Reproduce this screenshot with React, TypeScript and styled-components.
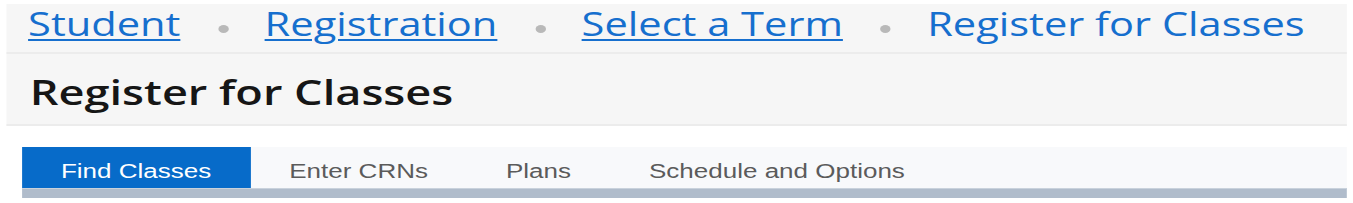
import React from "react";
import styled, { createGlobalStyle } from "styled-components";

const SCALE = 1.3;

const Global = createGlobalStyle`
  html, body {
    margin: 0;
    padding: 0;
    background: #ffffff;
    overflow: hidden;
  }
  * { box-sizing: border-box; }
`;

const Stretch = styled.div`
  width: ${1353 / SCALE}px;
  transform: scaleX(${SCALE});
  transform-origin: 0 0;
  padding: 4px 4.8px 0 4.6px;
  display: flex;
  flex-direction: column;
`;

const BreadcrumbBar = styled.nav`
  height: 50px;
  background: #f6f6f6;
  border-bottom: 2px solid #ececec;
  padding: 4.4px 17px 0;
  display: flex;
  align-items: flex-start;
  font-family: "Open Sans", sans-serif;
  font-size: 32px;
  line-height: 32px;
  color: #166fce;
`;

const Crumb = styled.a<{ $current?: boolean }>`
  color: #166fce;
  text-decoration: ${(p) => (p.$current ? "none" : "underline")};
  text-decoration-thickness: 1.5px;
  text-underline-offset: 3px;
  white-space: nowrap;
  cursor: pointer;
`;

const Dot = styled.span`
  width: 8px;
  height: 8px;
  border-radius: 50%;
  background: #b9b9b9;
  margin: 16.5px 27.8px 0 29px;
  flex: none;
`;

const TitleBar = styled.header`
  height: 72px;
  background: #f6f6f6;
  border-bottom: 2px solid #ececec;
  padding: 20.6px 17px 0 18.3px;
`;

const Title = styled.h1`
  margin: 0;
  font-family: "Open Sans", sans-serif;
  font-weight: 600;
  font-size: 34.7px;
  line-height: 34px;
  color: #161616;
  white-space: nowrap;
`;

const TabArea = styled.div`
  margin: 21px 0 0 12.3px;
  display: flex;
  flex-direction: column;
`;

const TabList = styled.div`
  display: flex;
  background: #f8f9fb;
  height: 41px;
`;

const Tab = styled.button<{ $active?: boolean }>`
  border: none;
  margin: 0;
  padding: 7px 30px 0;
  height: 41px;
  line-height: 34px;
  font-family: "Liberation Sans", Arial, sans-serif;
  font-size: 20px;
  white-space: nowrap;
  cursor: pointer;
  background: ${(p) => (p.$active ? "#076bc9" : "transparent")};
  color: ${(p) => (p.$active ? "#ffffff" : "#5b5b5b")};
`;

const TabRule = styled.div`
  height: 10px;
  background: #b0bccb;
  border-top: 1px solid #c9d2dc;
`;

const crumbs = ["Student", "Registration", "Select a Term"];
const tabs = ["Find Classes", "Enter CRNs", "Plans", "Schedule and Options"];

export default function App() {
  return (
    <>
      <Global />
      <Stretch>
        <BreadcrumbBar>
          {crumbs.map((c) => (
            <React.Fragment key={c}>
              <Crumb>{c}</Crumb>
              <Dot />
            </React.Fragment>
          ))}
          <Crumb $current>Register for Classes</Crumb>
        </BreadcrumbBar>
        <TitleBar>
          <Title>Register for Classes</Title>
        </TitleBar>
        <TabArea>
          <TabList>
            {tabs.map((t, i) => (
              <Tab key={t} $active={i === 0}>
                {t}
              </Tab>
            ))}
          </TabList>
          <TabRule />
        </TabArea>
      </Stretch>
    </>
  );
}
